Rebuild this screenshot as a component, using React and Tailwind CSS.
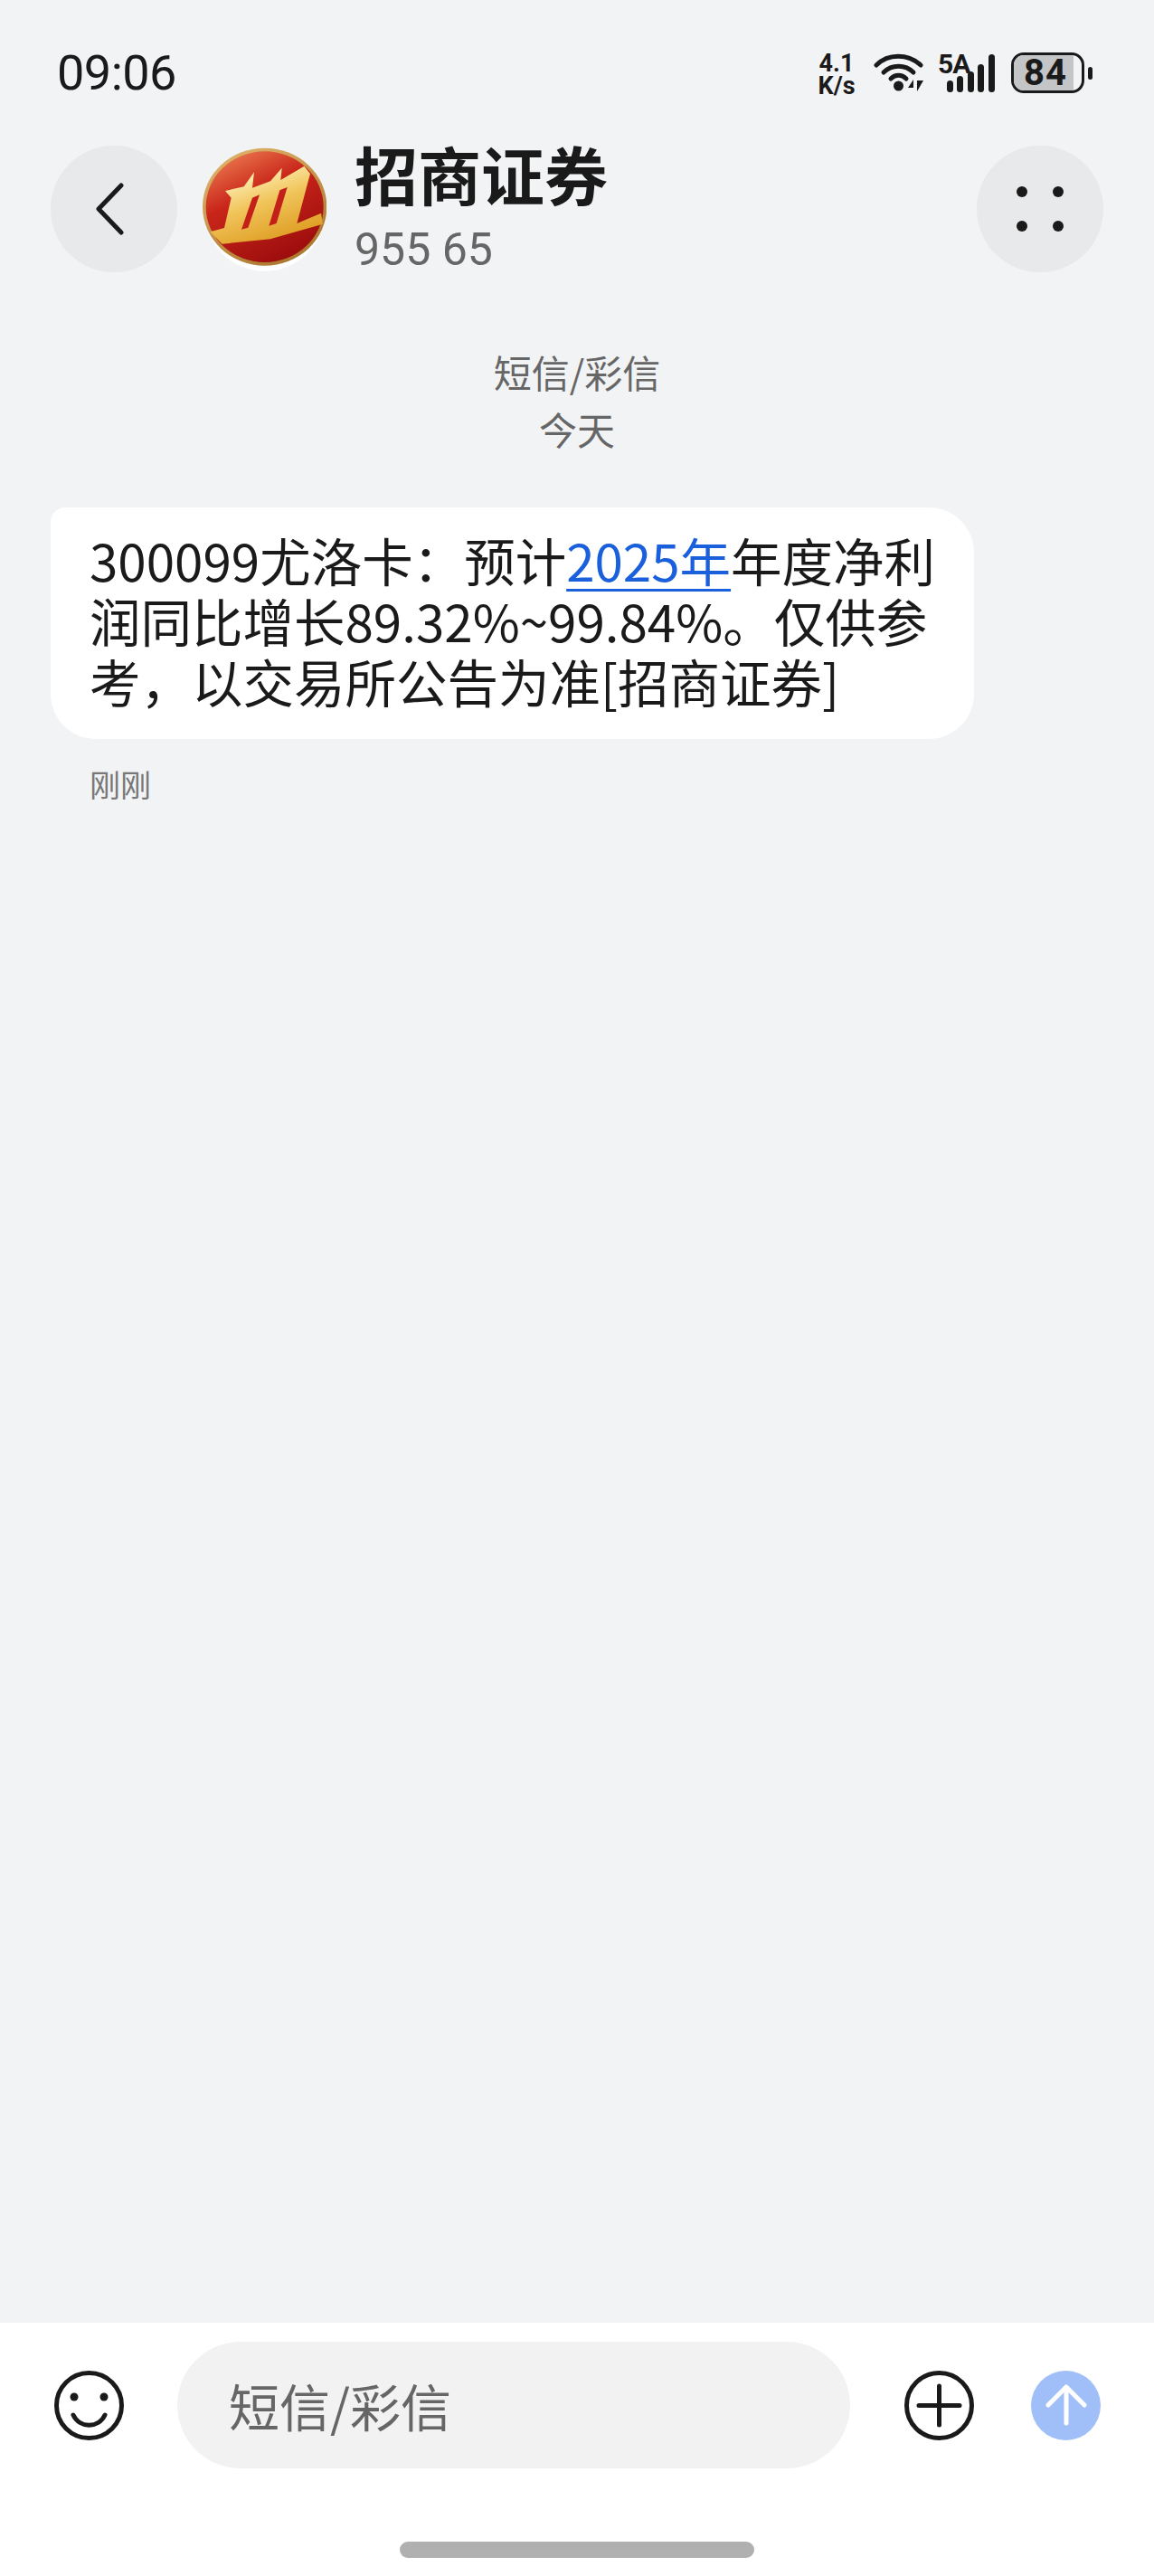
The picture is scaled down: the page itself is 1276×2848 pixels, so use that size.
import React from 'react';

const cjk = "font-['Noto_Sans_CJK_SC','Noto_Sans',sans-serif]";

// Broker badge: red disc with the gold three-stroke mark
function BrokerLogo() {
  return (
    <svg width="138" height="140" viewBox="72 38 414 420" className="shrink-0">
      <defs>
        <linearGradient id="disc" x1="0.2" y1="0.05" x2="0.7" y2="1">
          <stop offset="0" stopColor="#e8714a" />
          <stop offset="0.35" stopColor="#c9261a" />
          <stop offset="1" stopColor="#9a0c0c" />
        </linearGradient>
        <linearGradient id="rim" x1="0.2" y1="0" x2="0.8" y2="1">
          <stop offset="0" stopColor="#dfb36a" />
          <stop offset="1" stopColor="#a8742c" />
        </linearGradient>
        <linearGradient id="mark" x1="0.2" y1="0.1" x2="0.65" y2="1">
          <stop offset="0" stopColor="#fff3c0" />
          <stop offset="0.45" stopColor="#f0c45a" />
          <stop offset="1" stopColor="#dd9a1e" />
        </linearGradient>
      </defs>
      <ellipse cx="281" cy="248" rx="200" ry="200" fill="#ffffff" />
      <ellipse cx="281" cy="235" rx="206" ry="195" fill="url(#rim)" />
      <ellipse cx="281" cy="235" rx="195" ry="184" fill="url(#disc)" />
      <path
        d="M150 182 L212 168 L246 120 L240 172 L300 150 L338 106 L334 146 L412 100 L432 125 L388 290 L468 256 L474 292 L300 342 L140 358 L100 318 L147 305 L170 205 Z"
        fill="url(#mark)"
      />
      <path d="M240 205 L264 195 L226 304 L204 310 Z" fill="#c4201a" />
      <path d="M331 180 L356 170 L320 290 L295 298 Z" fill="#c4201a" />
    </svg>
  );
}

function WifiIcon() {
  return (
    <svg width="56" height="44" viewBox="0 0 56 44" fill="none" className="shrink-0">
      <path d="M3 14 C16 1 38 1 52 14" stroke="#1a1a1a" strokeWidth="5" strokeLinecap="round" />
      <path d="M11 22 C20 13 35 13 44 22" stroke="#1a1a1a" strokeWidth="5" strokeLinecap="round" />
      <path d="M19 29 C24 24 31 24 36 29" stroke="#1a1a1a" strokeWidth="5" strokeLinecap="round" />
      <circle cx="27.5" cy="37" r="5.5" fill="#1a1a1a" />
      <path d="M44 43 V30 L38 39 H44 Z" fill="#1a1a1a" />
      <path d="M48 43 V31 H55 Z" fill="#1a1a1a" />
    </svg>
  );
}

function SignalBars() {
  const bars = [
    { x: 10, top: 29 },
    { x: 21, top: 24 },
    { x: 33, top: 19 },
    { x: 44, top: 11 },
    { x: 56, top: 0 },
  ];
  return (
    <svg width="63" height="42" viewBox="0 0 63 42" className="shrink-0 self-end">
      {bars.map((b) => (
        <rect key={b.x} x={b.x} y={b.top} width="7" height={42 - b.top} rx="3.5" fill="#1a1a1a" />
      ))}
    </svg>
  );
}

function Battery() {
  return (
    <div className="flex items-center gap-1">
      <div className="relative w-[81px] h-[45px] rounded-[14px] border-[3px] border-[#1a1a1a] overflow-hidden flex items-center justify-center">
        <div className="absolute left-0 top-0 bottom-0 w-[66px] bg-[#c4c5c7]" />
        <span className="relative pr-[5px] font-['Roboto',sans-serif] text-[40px] leading-none font-bold tracking-[1px] text-[#1a1a1a]">84</span>
      </div>
      <div className="w-[5px] h-[14px] rounded-full bg-[#1a1a1a]" />
    </div>
  );
}

export default function App() {
  return (
    <div className={`${cjk} w-[1276px] h-[2848px] bg-[#f2f3f5] flex flex-col overflow-hidden`}>
      {/* status bar */}
      <div className="h-[161px] pl-[63px] pr-[68px] pt-[52px] flex items-start justify-between">
        <span className="font-['Roboto',sans-serif] text-[54px] leading-[58px] font-normal tracking-[-0.5px] text-[#1a1a1a]">09:06</span>
        <div className="flex items-start pt-[6px]">
          <div className="w-[44px] mr-[19px] font-['Roboto',sans-serif] font-bold text-[#1a1a1a] text-[27px] leading-[25px] text-center">
            <div>4.1</div>
            <div>K/s</div>
          </div>
          <WifiIcon />
          <div className="relative ml-[15px] mr-[18px] h-[44px] flex">
            <span className="absolute left-0 top-0 font-['Roboto',sans-serif] font-bold text-[30px] leading-[26px] tracking-[-1px] text-[#1a1a1a]">5A</span>
            <SignalBars />
          </div>
          <Battery />
        </div>
      </div>

      {/* conversation header */}
      <div className="h-[140px] px-[56px] flex items-center">
        <button className="w-[140px] h-[140px] pr-[8px] rounded-full bg-[#e8e9eb] flex items-center justify-center shrink-0">
          <svg width="36" height="60" viewBox="0 0 36 60" fill="none">
            <path d="M30 4 L5 30 L30 56" stroke="#1a1a1a" strokeWidth="5" strokeLinecap="round" strokeLinejoin="round" />
          </svg>
        </button>
        <div className="ml-[27px] self-start pt-[2px]">
          <BrokerLogo />
        </div>
        <div className="ml-[31px] flex-1 flex flex-col gap-[20px]">
          <div className="text-[70px] leading-[70px] font-bold text-[#1a1a1a]">招商证券</div>
          <div className="text-[50px] leading-[58px] text-[#666666] font-['Roboto',sans-serif]">955 65</div>
        </div>
        <button className="w-[140px] h-[140px] rounded-full bg-[#e8e9eb] grid grid-cols-[12px_12px] gap-x-[28px] gap-y-[26px] place-content-center shrink-0">
          <span className="w-3 h-3 rounded-full bg-[#1a1a1a]" />
          <span className="w-3 h-3 rounded-full bg-[#1a1a1a]" />
          <span className="w-3 h-3 rounded-full bg-[#1a1a1a]" />
          <span className="w-3 h-3 rounded-full bg-[#1a1a1a]" />
        </button>
      </div>

      {/* thread */}
      <div className="flex-1 px-[56px] pt-[78px]">
        <div className="text-center text-[42px] leading-[63px] text-[#666666]">
          <div>短信/彩信</div>
          <div>今天</div>
        </div>
        <div className="mt-[56px] w-[1021px] rounded-tl-[16px] rounded-tr-[50px] rounded-b-[50px] bg-white pl-[43px] pr-[40px] pt-[24px] pb-[31px] text-[56.5px] leading-[67px] text-[#1a1a1a]">
          300099尤洛卡：预计
          <span className="text-[#1a5fdc] underline decoration-[3px] underline-offset-[8px]">2025年</span>
          年度净利润同比增长89.32%~99.84%。仅供参考，以交易所公告为准[招商证券]
        </div>
        <div className="mt-[28px] pl-[43px] text-[34px] leading-[44px] text-[#777777]">刚刚</div>
      </div>

      {/* compose bar */}
      <div className="h-[280px] bg-white flex flex-col">
        <div className="pt-[21px] pl-[60px] pr-[59px] flex items-center">
          <svg width="77" height="77" viewBox="0 0 77 77" fill="none" className="shrink-0">
            <circle cx="38.5" cy="38.5" r="36" stroke="#1a1a1a" strokeWidth="5" />
            <circle cx="22" cy="29" r="4.5" fill="#1a1a1a" />
            <circle cx="55" cy="29" r="4.5" fill="#1a1a1a" />
            <path d="M21 49 C28 64 49 64 56 49" stroke="#1a1a1a" strokeWidth="5" strokeLinecap="round" />
          </svg>
          <div className="ml-[59px] w-[744px] h-[140px] rounded-[70px] bg-[#f2f2f3] pl-[57px] flex items-center text-[56px] text-[#666666]">短信/彩信</div>
          <svg width="77" height="77" viewBox="0 0 77 77" fill="none" className="ml-[60px] shrink-0">
            <circle cx="38.5" cy="38.5" r="36" stroke="#1a1a1a" strokeWidth="5" />
            <path d="M38.5 17 V60 M16 38.5 H61" stroke="#1a1a1a" strokeWidth="5" strokeLinecap="round" />
          </svg>
          <div className="ml-[63px] w-[77px] h-[77px] rounded-full bg-[#a0bff8] flex items-center justify-center shrink-0">
            <svg width="46" height="46" viewBox="0 0 46 46" fill="none">
              <path d="M23 43 V4 M3 23 L23 3 L43 23" stroke="#ffffff" strokeWidth="5" strokeLinecap="round" strokeLinejoin="round" />
            </svg>
          </div>
        </div>
        <div className="mt-[81px] mx-auto w-[392px] h-[18px] rounded-[9px] bg-[#b0b0b0]" />
      </div>
    </div>
  );
}
